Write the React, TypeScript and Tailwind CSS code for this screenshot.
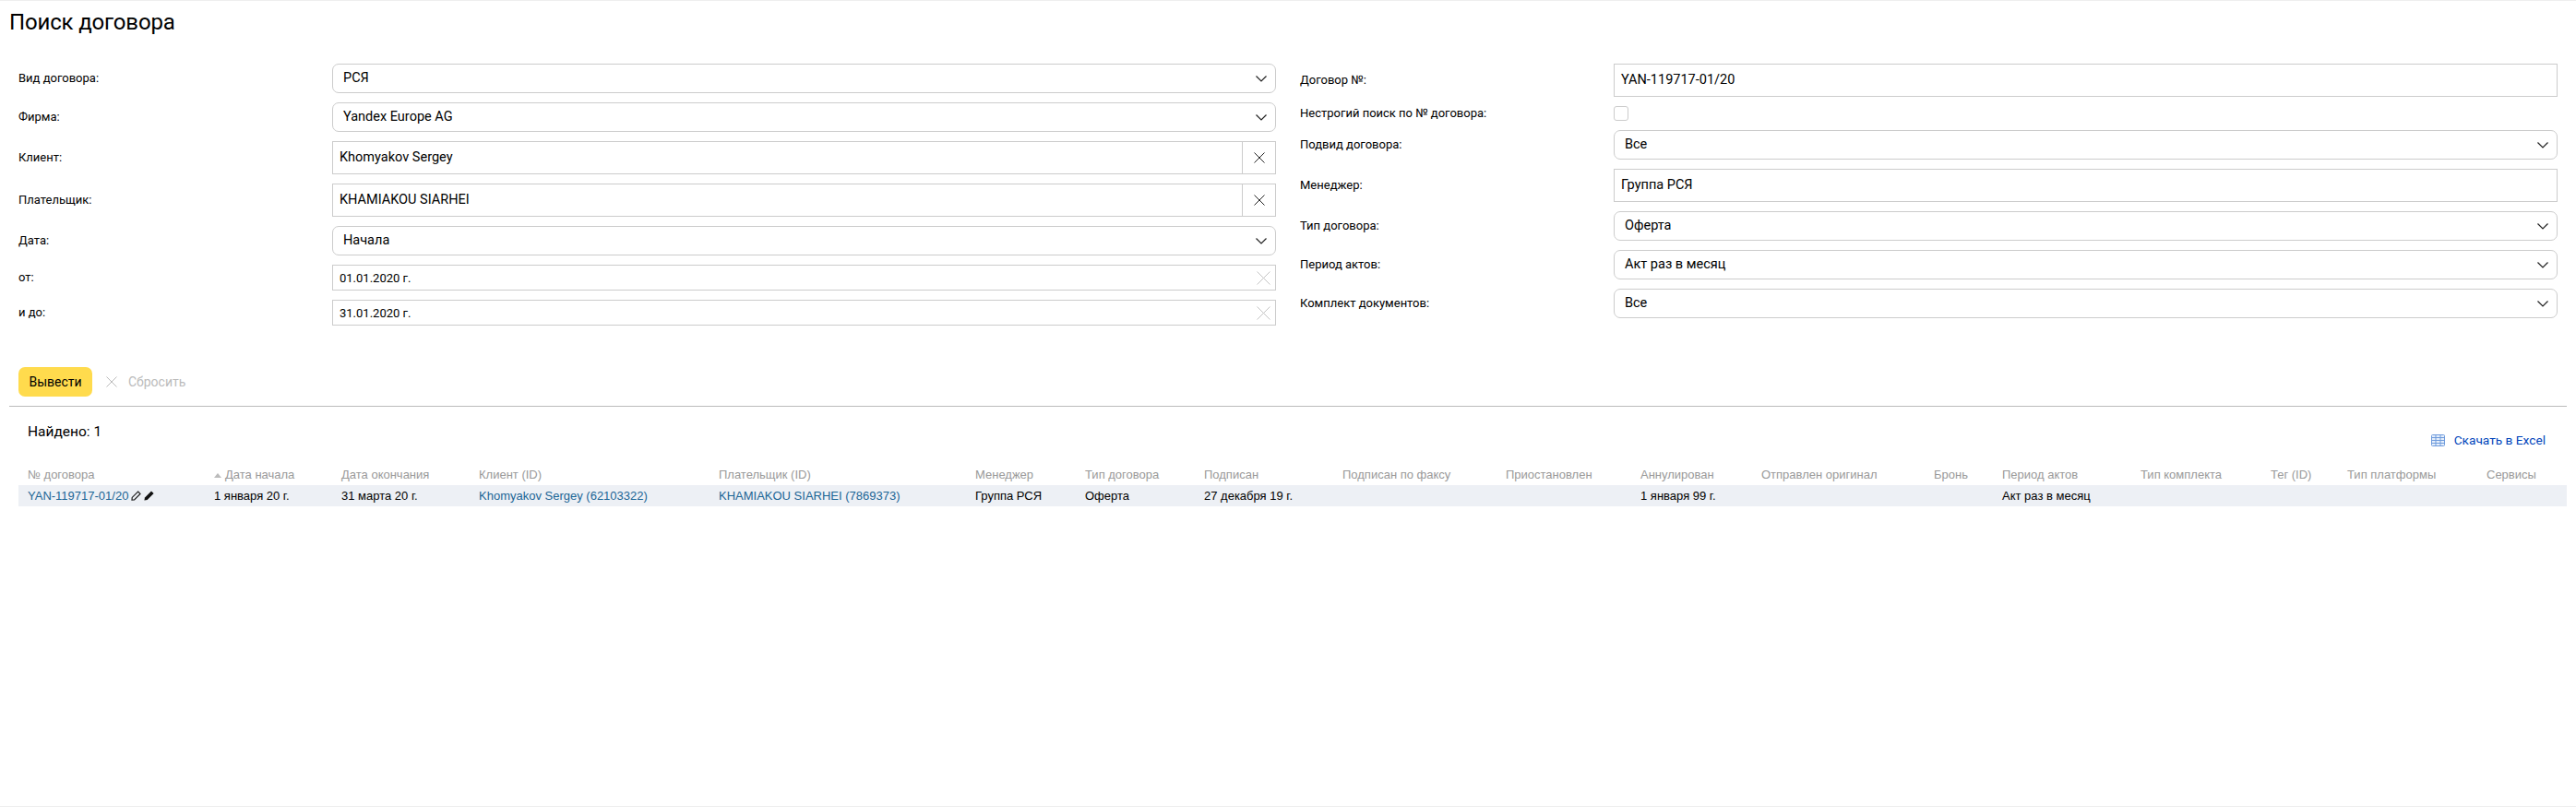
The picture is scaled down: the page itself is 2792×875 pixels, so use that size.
import type { ReactNode } from "react";

const headers = [
  "№ договора",
  "Дата начала",
  "Дата окончания",
  "Клиент (ID)",
  "Плательщик (ID)",
  "Менеджер",
  "Тип договора",
  "Подписан",
  "Подписан по факсу",
  "Приостановлен",
  "Аннулирован",
  "Отправлен оригинал",
  "Бронь",
  "Период актов",
  "Тип комплекта",
  "Тег (ID)",
  "Тип платформы",
  "Сервисы",
];

function Chevron() {
  return (
    <svg width="12" height="7" viewBox="0 0 12 7" fill="none" stroke="#222222" strokeWidth="1.2">
      <path d="M0.5 0.5 L6 6 L11.5 0.5" />
    </svg>
  );
}

function Cross({ size, color, width = 1 }: { size: number; color: string; width?: number }) {
  return (
    <svg width={size} height={size} viewBox={`0 0 ${size} ${size}`} fill="none" stroke={color} strokeWidth={width}>
      <path d={`M0.5 0.5 L${size - 0.5} ${size - 0.5} M${size - 0.5} 0.5 L0.5 ${size - 0.5}`} />
    </svg>
  );
}

function Row({ label, children }: { label: string; children: ReactNode }) {
  return (
    <div className="flex items-center">
      <div className="w-[340px] shrink-0 text-[13px] leading-4">{label}</div>
      <div className="flex-1">{children}</div>
    </div>
  );
}

function Select({ value }: { value: string }) {
  return (
    <div className="flex h-8 items-center justify-between rounded-[7px] border border-[#cccccc] pl-[11px] pr-[9px] text-[14.5px]">
      <span>{value}</span>
      <Chevron />
    </div>
  );
}

function Input({ value, clear }: { value: string; clear?: boolean }) {
  return (
    <div className="flex h-9 items-center border border-[#cccccc] text-[14.5px]">
      <span className="flex-1 pl-[7px]">{value}</span>
      {clear && (
        <span className="flex h-full w-[36px] items-center justify-center border-l border-[#cccccc]">
          <Cross size={12} color="#222222" />
        </span>
      )}
    </div>
  );
}

function DateInput({ value }: { value: string }) {
  return (
    <div className="flex h-7 items-center justify-between border border-[#cccccc] pl-[7px] pr-[5px] text-[13px]">
      <span className="pt-[2px]">{value}</span>
      <Cross size={15} color="#c4c4c4" />
    </div>
  );
}

function PencilOutline() {
  return (
    <svg width="11" height="11" viewBox="0 0 11 11" fill="none" stroke="#222222" strokeWidth="1.2">
      <path d="M7.6 1 L10 3.4 L3.6 9.8 L1 10 L1.2 7.4 Z" />
    </svg>
  );
}

function PencilFilled() {
  return (
    <svg width="11" height="11" viewBox="0 0 11 11" fill="#111111">
      <path d="M8 0.4 L10.6 3 L3.6 10 L0.4 10.6 L1 7.4 Z" />
    </svg>
  );
}

function ExcelIcon() {
  return (
    <svg width="15" height="13" viewBox="0 0 15 13" fill="#e6effb" stroke="#6f9bdc" strokeWidth="1">
      <rect x="0.5" y="0.5" width="14" height="12" rx="1" />
      <path d="M0.5 3.5 H14.5 M0.5 6.5 H14.5 M0.5 9.5 H14.5 M5 0.5 V12.5 M10 0.5 V12.5" />
    </svg>
  );
}

export default function App() {
  return (
    <div className="h-[875px] border-y border-[#eeeeee] bg-white font-['Roboto',sans-serif] text-black">
      <h1 className="pl-[10px] pt-[9px] pb-[1px] text-[24px] leading-7 font-normal tracking-[-0.15px]">Поиск договора</h1>

      <div className="mt-[30px] flex pl-5 pr-5">
        <div className="flex w-[1363px] shrink-0 flex-col gap-[10px]">
          <Row label="Вид договора:"><Select value="РСЯ" /></Row>
          <Row label="Фирма:"><Select value="Yandex Europe AG" /></Row>
          <Row label="Клиент:"><Input value="Khomyakov Sergey" clear /></Row>
          <Row label="Плательщик:"><Input value="KHAMIAKOU SIARHEI" clear /></Row>
          <Row label="Дата:"><Select value="Начала" /></Row>
          <Row label="от:"><DateInput value="01.01.2020 г." /></Row>
          <Row label="и до:"><DateInput value="31.01.2020 г." /></Row>
        </div>
        <div className="ml-[26px] flex flex-1 flex-col gap-[10px]">
          <Row label="Договор №:"><Input value="YAN-119717-01/20" /></Row>
          <Row label="Нестрогий поиск по № договора:">
            <div className="size-4 rounded-[3px] border border-[#cccccc]" />
          </Row>
          <Row label="Подвид договора:"><Select value="Все" /></Row>
          <Row label="Менеджер:"><Input value="Группа РСЯ" /></Row>
          <Row label="Тип договора:"><Select value="Оферта" /></Row>
          <Row label="Период актов:"><Select value="Акт раз в месяц" /></Row>
          <Row label="Комплект документов:"><Select value="Все" /></Row>
        </div>
      </div>

      <div className="mt-[45px] flex items-center pl-5">
        <button className="h-8 w-20 rounded-[7px] bg-[#ffdb4d] text-[14px]">Вывести</button>
        <span className="ml-[15px] flex items-center gap-[12px] text-[14px] text-[#bbbbbb]">
          <Cross size={12} color="#bbbbbb" />
          Сбросить
        </span>
      </div>

      <div className="mx-[10px] mt-[10px] border-t border-[#bbbbbb]" />

      <div className="mr-[33px] ml-5 mt-[18px] flex items-start justify-between pl-[10px]">
        <div className="text-[15.5px] leading-[18px]">Найдено: 1</div>
        <a className="mt-[10px] flex items-center gap-[10px] text-[13.7px] leading-4 text-[#0044bb]">
          <ExcelIcon />
          Скачать в Excel
        </a>
      </div>

      <table className="ml-5 mt-[19px] w-[2762px] table-fixed font-['Liberation_Sans',sans-serif] text-[13px]">
        <colgroup>
          <col className="w-[202px]" />
          <col className="w-[138px]" />
          <col className="w-[149px]" />
          <col className="w-[260px]" />
          <col className="w-[278px]" />
          <col className="w-[119px]" />
          <col className="w-[129px]" />
          <col className="w-[150px]" />
          <col className="w-[177px]" />
          <col className="w-[146px]" />
          <col className="w-[131px]" />
          <col className="w-[187px]" />
          <col className="w-[74px]" />
          <col className="w-[150px]" />
          <col className="w-[141px]" />
          <col className="w-[83px]" />
          <col className="w-[151px]" />
          <col className="w-[97px]" />
        </colgroup>
        <thead>
          <tr>
            {headers.map((h, i) => (
              <th key={h} className="h-[22px] pl-[10px] text-left font-normal whitespace-nowrap text-[#999999]">
                {i === 1 ? (
                  <span className="flex items-center gap-[4px]">
                    <span className="size-0 border-x-[4px] border-b-[5px] border-x-transparent border-b-[#bbbbbb]" />
                    {h}
                  </span>
                ) : (
                  h
                )}
              </th>
            ))}
          </tr>
        </thead>
        <tbody>
          <tr className="h-[23px] bg-[#edf0f5] whitespace-nowrap">
            <td className="pl-[10px]">
              <span className="flex items-center gap-[3px]">
                <a className="text-[#1a6595]">YAN-119717-01/20</a>
                <PencilOutline />
                <PencilFilled />
              </span>
            </td>
            <td className="pl-[10px]">1 января 20 г.</td>
            <td className="pl-[10px]">31 марта 20 г.</td>
            <td className="pl-[10px] text-[#1a6595]">Khomyakov Sergey (62103322)</td>
            <td className="pl-[10px] text-[#1a6595]">KHAMIAKOU SIARHEI (7869373)</td>
            <td className="pl-[10px]">Группа РСЯ</td>
            <td className="pl-[10px]">Оферта</td>
            <td className="pl-[10px]">27 декабря 19 г.</td>
            <td />
            <td />
            <td className="pl-[10px]">1 января 99 г.</td>
            <td />
            <td />
            <td className="pl-[10px]">Акт раз в месяц</td>
            <td />
            <td />
            <td />
            <td />
          </tr>
        </tbody>
      </table>
    </div>
  );
}
